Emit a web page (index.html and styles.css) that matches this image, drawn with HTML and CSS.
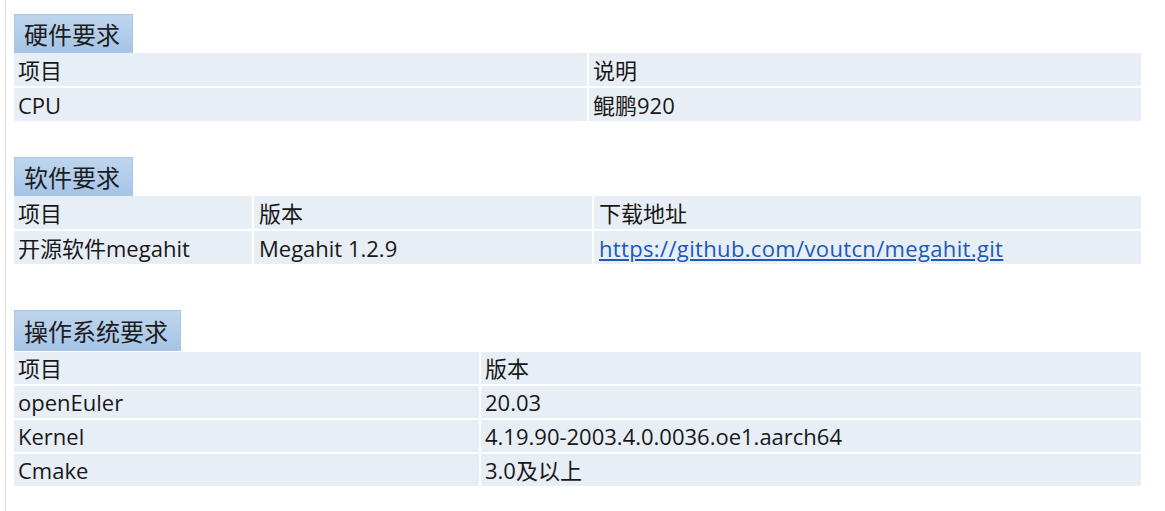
FILE: index.html
```html
<!DOCTYPE html>
<html lang="zh-CN">
<head>
<meta charset="utf-8">
<title>环境要求</title>
<link rel="stylesheet" href="styles.css">
</head>
<body>
<div class="page">
  <section class="sec sec-hw">
    <div class="title">硬件要求</div>
    <div class="table cols-hw">
      <div class="cell">项目</div><div class="cell">说明</div>
      <div class="cell">CPU</div><div class="cell">鲲鹏920</div>
    </div>
  </section>
  <section class="sec sec-sw">
    <div class="title">软件要求</div>
    <div class="table cols-sw">
      <div class="cell">项目</div><div class="cell">版本</div><div class="cell">下载地址</div>
      <div class="cell">开源软件megahit</div><div class="cell">Megahit 1.2.9</div><div class="cell"><a class="link" href="#">https://github.com/voutcn/megahit.git</a></div>
    </div>
  </section>
  <section class="sec sec-os">
    <div class="title title-tall">操作系统要求</div>
    <div class="table cols-os">
      <div class="cell">项目</div><div class="cell">版本</div>
      <div class="cell">openEuler</div><div class="cell">20.03</div>
      <div class="cell">Kernel</div><div class="cell">4.19.90-2003.4.0.0036.oe1.aarch64</div>
      <div class="cell">Cmake</div><div class="cell">3.0及以上</div>
    </div>
  </section>
</div>
</body>
</html>
```
FILE: styles.css
```css
html, body {
  margin: 0;
  padding: 0;
  background: #ffffff;
}
body {
  font-family: "Open Sans", "Noto Sans CJK SC", sans-serif;
  color: #181818;
  padding-left: 5px;
}
.page {
  border-left: 1px solid #dcdcdc;
  height: 511px;
  box-sizing: border-box;
  padding: 14px 0 0 8px;
  width: 1136px;
}
.sec {
  display: flex;
  flex-direction: column;
  align-items: flex-start;
}
.sec-sw { margin-top: 36px; }
.sec-os { margin-top: 46px; }
.title {
  font-family: "Noto Sans CJK SC", sans-serif;
  font-size: 24px;
  line-height: 37px;
  height: 37px;
  padding: 0 12px 0 9px;
  background: linear-gradient(#bfd5ee, #a6c4e7);
  border: 1px solid #a9c5e6;
  box-sizing: content-box;
  color: #1d1d1d;
}
.title-tall {
  height: 39px;
  line-height: 39px;
  margin-bottom: 1px;
}
.table {
  display: grid;
  width: 1127px;
  column-gap: 2px;
  row-gap: 2px;
  grid-auto-rows: 33px;
}
.cols-hw { grid-template-columns: 573px 1fr; }
.cols-sw { grid-template-columns: 238px 338px 1fr; }
.cols-os { grid-template-columns: 465px 1fr; grid-auto-rows: 32px; }
.cell {
  background: #e8eef6;
  font-size: 22px;
  line-height: 32px;
  padding-left: 4px;
  white-space: nowrap;
  overflow: hidden;
  display: flex;
  align-items: center;
}
.cols-sw .cell:nth-child(3n+2),
.cols-sw .cell:nth-child(3n) { padding-left: 5px; }
.link {
  color: #1a5ab8;
  text-decoration: underline;
  letter-spacing: 0.35px;
}
```
